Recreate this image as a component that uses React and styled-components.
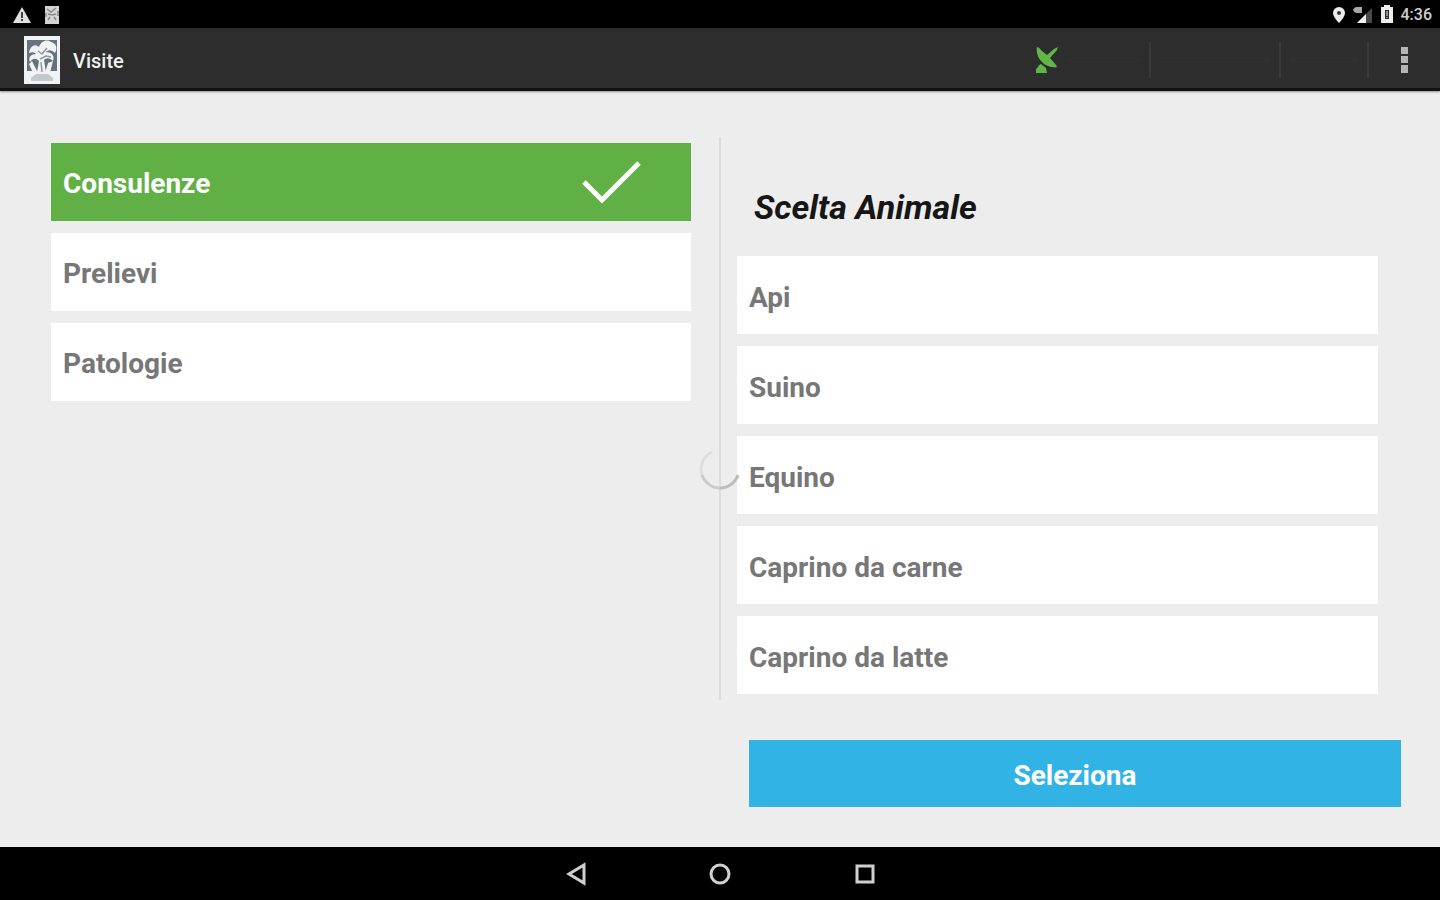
import { useState } from "react";
import styled, { createGlobalStyle } from "styled-components";

const visitTypes = ["Consulenze", "Prelievi", "Patologie"];
const animals = ["Api", "Suino", "Equino", "Caprino da carne", "Caprino da latte"];

const LogoDrawing = () => (
  <svg viewBox="0 0 36 48" width="100%" height="100%" aria-hidden="true">
    <rect width="36" height="48" fill="#f0f2f4" />
    <rect x="3" y="4" width="30" height="31" fill="#68727c" />
    <path
      d="M5 17 C6 10 11 7 15 11 C17 5 23 3 27 6 C32 7 34 12 31 17 C27 13 24 14 22 16 C28 16 31 20 29 25 C25 21 22 22 20 24 L22 36 H13 L15 25 C11 21 8 23 6 26 C4 21 7 18 12 18 C10 16 8 16 5 17 Z"
      fill="#f0f2f4"
    />
    <path
      d="M14 15 L18 18 L23 12 M16 23 L22 20 L27 21 M17 26 L18 36"
      fill="none"
      stroke="#8e98a1"
      strokeWidth="1.5"
    />
    <path
      d="M21 37 L24 27 L29 25 L26 37 Z M14 37 L8 25 L5 28 L9 37 Z"
      fill="#f0f2f4"
    />
    <path d="M7 45 V42 L12 38 H24 L29 42 V45 Z" fill="#c3c9ce" />
  </svg>
);

const StatusBar = () => (
  <Status>
    <StatusGroup>
      <svg width="20" height="18" viewBox="0 0 20 18" aria-hidden="true">
        <path d="M10 1 L19 17 H1 Z" fill="#e0e0e0" />
        <path d="M10 6 V12 M10 13 V15" stroke="#444" strokeWidth="2" />
      </svg>
      <svg width="14" height="18" viewBox="0 0 14 18" aria-hidden="true">
        <rect width="14" height="18" fill="#d4d4d4" />
        <path
          d="M2 3 L6 6 L11 2 M3 8 L7 9 L11 8 M5 11 L3 14 M9 11 L11 14 M1 7 V11 M13 5 V10"
          stroke="#888"
          strokeWidth="1.5"
          fill="none"
        />
      </svg>
    </StatusGroup>
    <StatusGroup $tight>
      <svg width="14" height="18" viewBox="0 0 14 18" aria-hidden="true">
        <path
          d="M7 1 A6 6 0 0 1 13 7 C13 11 7 17 7 17 C7 17 1 11 1 7 A6 6 0 0 1 7 1 Z"
          fill="#ededed"
        />
        <circle cx="7" cy="7" r="2" fill="#333" />
      </svg>
      <svg width="20" height="18" viewBox="0 0 20 18" aria-hidden="true">
        <path d="M19 2 V17 H4 Z" fill="#484848" />
        <path d="M13 8 V17 H4 Z" fill="#f2f2f2" />
        <path d="M0 4 Q1 1 4 1 H9 V7 H4 Q1 7 0 4 Z" fill="#a8a8a8" />
      </svg>
      <svg width="14" height="20" viewBox="0 0 14 20" aria-hidden="true">
        <path d="M4 0 H10 V2 H13 V18 H1 V2 H4 Z" fill="#ededed" />
        <path d="M5 5 H9 V14 H5 Z" fill="#2c2c2c" />
        <path d="M7 6 V11 M7 12 V13" stroke="#ededed" strokeWidth="1" />
      </svg>
      <Clock>4:36</Clock>
    </StatusGroup>
  </Status>
);

const ActionBar = () => (
  <Bar>
    <Logo>
      <LogoDrawing />
    </Logo>
    <BarTitle>Visite</BarTitle>
    <Actions>
      <Action $width={116} aria-label="GPS">
        <svg width="24" height="28" viewBox="0 0 24 28" aria-hidden="true">
          <path
            d="M2 1 C4 1 6 4 7 5 L12 9 L19 3 L23 1 L22 4 L15 12 L21 19 C23 21 21 22 18 21 C9 21 0 11 2 1 Z"
            fill="#62b646"
          />
          <path d="M1 27 V23 C3 22 4 18 6 18 L11 22 L12 27 Z" fill="#62b646" />
        </svg>
        <Faded />
      </Action>
      <Action $width={130} aria-label="Azione">
        <Faded />
      </Action>
      <Action $width={88} aria-label="Azione">
        <Faded />
      </Action>
      <Overflow aria-label="Altro">
        <svg width="8" height="28" viewBox="0 0 8 28" aria-hidden="true">
          <path d="M1 1 H8 V8 H1 Z M1 10 H8 V17 H1 Z M1 19 H8 V27 H1 Z" fill="#b5b5b5" />
        </svg>
      </Overflow>
    </Actions>
  </Bar>
);

const NavigationBar = () => (
  <Navigation>
    <NavButton aria-label="Indietro">
      <svg width="24" height="26" viewBox="0 0 24 26" aria-hidden="true">
        <path d="M20 4 V22 L5 13 Z" />
      </svg>
    </NavButton>
    <NavButton aria-label="Home">
      <svg width="24" height="26" viewBox="0 0 24 26" aria-hidden="true">
        <circle cx="12" cy="13" r="9" />
      </svg>
    </NavButton>
    <NavButton aria-label="Recenti">
      <svg width="24" height="26" viewBox="0 0 24 26" aria-hidden="true">
        <rect x="5" y="5" width="16" height="16" />
      </svg>
    </NavButton>
  </Navigation>
);

const App = () => {
  const [visit, setVisit] = useState("Consulenze");
  const [animal, setAnimal] = useState(null);

  return (
    <Screen>
      <GlobalStyle />
      <StatusBar />
      <ActionBar />
      <Main>
        <VisitPanel>
          <List>
            {visitTypes.map((name) => (
              <Option
                key={name}
                $active={visit === name}
                aria-pressed={visit === name}
                onClick={() => setVisit(name)}
              >
                {name}
                {visit === name && (
                  <svg width="60" height="46" viewBox="0 0 60 46" aria-hidden="true">
                    <path d="M3 22 L21 40 L58 3" fill="none" stroke="#fff" strokeWidth="5" />
                  </svg>
                )}
              </Option>
            ))}
          </List>
        </VisitPanel>
        <Divider>
          <Spinner viewBox="0 0 42 42" role="img" aria-label="Caricamento">
            <path d="M13 4 A19 19 0 0 0 3 27" stroke="#dedede" />
            <path d="M3 27 A19 19 0 0 0 21 40" stroke="#cbcbcb" />
            <path d="M21 40 A19 19 0 0 0 39 27" stroke="#bcbcbc" />
          </Spinner>
        </Divider>
        <AnimalPanel>
          <Heading>Scelta Animale</Heading>
          <List>
            {animals.map((name) => (
              <Option
                key={name}
                $active={animal === name}
                aria-pressed={animal === name}
                onClick={() => setAnimal(name)}
              >
                {name}
              </Option>
            ))}
          </List>
          <Submit>Seleziona</Submit>
        </AnimalPanel>
      </Main>
      <NavigationBar />
    </Screen>
  );
};

const GlobalStyle = createGlobalStyle`
  * {
    box-sizing: border-box;
  }
  body {
    margin: 0;
    background: #ededed;
    font-family: Roboto, "Liberation Sans", sans-serif;
  }
  button {
    border: 0;
    padding: 0;
    background: none;
    font-family: inherit;
    cursor: pointer;
  }
  svg {
    display: block;
  }
`;

const Screen = styled.div`
  min-height: 100vh;
  display: flex;
  flex-direction: column;
`;

const Status = styled.div`
  height: 28px;
  padding: 2px 8px 0 12px;
  display: flex;
  justify-content: space-between;
  align-items: center;
  background: #000;
`;

const StatusGroup = styled.div`
  display: flex;
  align-items: center;
  gap: ${(props) => (props.$tight ? "7px" : "13px")};
`;

const Clock = styled.span`
  color: #d0d0d0;
  font-size: 16px;
  font-weight: 500;
  line-height: 20px;
`;

const Bar = styled.header`
  height: 63px;
  padding: 0 16px 0 24px;
  display: flex;
  align-items: center;
  background: #2d2d2d;
  border-bottom: 3px solid #121212;
  box-shadow: 0 1px 2px rgba(0, 0, 0, 0.4);
`;

const Logo = styled.div`
  width: 36px;
  height: 48px;
  margin-top: 4px;
`;

const BarTitle = styled.h1`
  margin: 6px 0 0 13px;
  color: #f0f0f0;
  font-size: 20px;
  font-weight: 500;
  line-height: 24px;
`;

const Actions = styled.div`
  margin: 4px 0 0 auto;
  display: flex;
  align-items: center;
`;

const Action = styled.button`
  width: ${(props) => props.$width}px;
  height: 36px;
  display: flex;
  align-items: center;
  gap: 8px;
  padding-right: 8px;
  border-right: 2px solid #393939;
  & + & {
    padding-left: 8px;
  }
`;

const Faded = styled.span`
  flex: 1;
  height: 6px;
  border-radius: 3px;
  background: #2f2f2f;
`;

const Overflow = styled.button`
  width: 40px;
  margin-left: 15px;
  display: flex;
  justify-content: center;
`;

const Main = styled.main`
  flex: 1;
  display: grid;
  grid-template-columns: 1fr 2px 1fr;
`;

const VisitPanel = styled.section`
  padding: 52px 28px 40px 51px;
`;

const Divider = styled.div`
  position: relative;
  margin: 46px 0 147px;
  background: #dcdcdc;
`;

const Spinner = styled.svg`
  position: absolute;
  top: 59%;
  left: 50%;
  width: 42px;
  height: 42px;
  transform: translate(-50%, -50%);
  fill: none;
  stroke-width: 3px;
`;

const AnimalPanel = styled.section`
  display: flex;
  flex-direction: column;
  padding: 96px 39px 40px 16px;
`;

const Heading = styled.h2`
  margin: 0 0 29px 17px;
  color: #161616;
  font-size: 34px;
  font-style: italic;
  font-weight: 700;
  line-height: 40px;
`;

const List = styled.div`
  display: flex;
  flex-direction: column;
  gap: 12px;
  ${AnimalPanel} & {
    margin-right: 23px;
  }
`;

const Option = styled.button`
  height: 78px;
  padding: 2px 50px 0 12px;
  display: flex;
  align-items: center;
  justify-content: space-between;
  background: ${(props) => (props.$active ? "#61b045" : "#fff")};
  color: ${(props) => (props.$active ? "#fff" : "#777")};
  font-size: 28px;
  font-weight: 700;
  text-align: left;
  ${AnimalPanel} & {
    padding-top: 4px;
  }
`;

const Submit = styled.button`
  height: 67px;
  margin: 46px 0 0 12px;
  padding-top: 3px;
  background: #31b3e6;
  color: #fff;
  font-size: 28px;
  font-weight: 700;
`;

const Navigation = styled.nav`
  height: 53px;
  display: flex;
  justify-content: center;
  align-items: center;
  gap: 120px;
  background: #000;
`;

const NavButton = styled.button`
  svg {
    fill: none;
    stroke: #cfcfcf;
    stroke-width: 3px;
  }
`;

export default App;
